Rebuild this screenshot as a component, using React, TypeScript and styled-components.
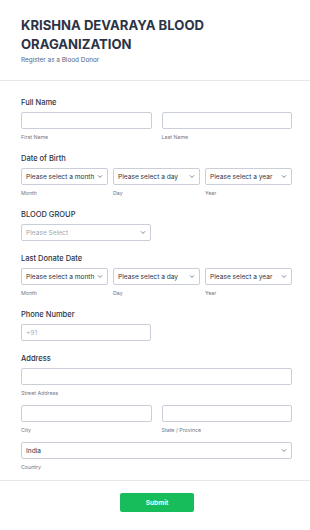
import styled, { createGlobalStyle } from "styled-components";

const GlobalStyle = createGlobalStyle`
  html, body {
    margin: 0;
    padding: 0;
    background: #ffffff;
  }
  body {
    font-family: Inter, "Noto Sans", "Liberation Sans", sans-serif;
    color: #2c3345;
  }
  * { box-sizing: border-box; }
`;

const Page = styled.div`
  width: 310px;
  min-height: 530px;
  background: #fff;
`;

const Header = styled.header`
  padding: 16px 18px 15px 21px;
  border-bottom: 1px solid #e5e7eb;
`;

const Title = styled.h1`
  margin: 0;
  font-size: 13.1px;
  line-height: 19px;
  font-weight: 700;
  color: #2c3345;
`;

const Subtitle = styled.p`
  margin: 2px 0 0;
  font-size: 6.4px;
  line-height: 9px;
  color: #57647e;
`;

const Fields = styled.div`
  display: flex;
  flex-direction: column;
  gap: 13px;
  padding: 17px 18px 9px 21px;
  border-bottom: 1px solid #e5e7eb;
`;

const Field = styled.div`
  display: flex;
  flex-direction: column;
`;

const Label = styled.div`
  font-size: 7.5px;
  line-height: 10px;
  font-weight: 500;
  color: #2c3345;
  margin-bottom: 4px;
`;

const Row = styled.div<{ cols: number; gap: number }>`
  display: grid;
  grid-template-columns: repeat(${(p) => p.cols}, 1fr);
  column-gap: ${(p) => p.gap}px;
  row-gap: 8px;
`;

const Cell = styled.div<{ half?: boolean; wide?: boolean }>`
  display: flex;
  flex-direction: column;
  width: ${(p) => (p.half ? "130px" : "auto")};
  grid-column: ${(p) => (p.wide ? "1 / -1" : "auto")};
`;

const TextInput = styled.input`
  height: 17px;
  width: 100%;
  border: 1px solid #c9ced9;
  border-radius: 2px;
  padding: 0 4px;
  font-family: inherit;
  font-size: 6.6px;
  color: #2c3345;
  background: #fff;
  outline: none;
  &::placeholder {
    color: #a7adbd;
  }
`;

const SelectBox = styled.div<{ muted?: boolean }>`
  height: 17px;
  width: 100%;
  border: 1px solid #c9ced9;
  border-radius: 2px;
  padding: 0 4px;
  display: flex;
  align-items: center;
  justify-content: space-between;
  font-size: 6.6px;
  color: ${(p) => (p.muted ? "#a0a7b8" : "#2c3345")};
  background: #fff;
  white-space: nowrap;
  overflow: hidden;
`;

const SubLabel = styled.div`
  margin-top: 4px;
  font-size: 5.3px;
  line-height: 8px;
  color: #6f7689;
`;

const Footer = styled.div`
  display: flex;
  justify-content: center;
  padding: 12px 0 16px 4px;
`;

const SubmitButton = styled.button`
  width: 74px;
  height: 19px;
  border: none;
  border-radius: 2px;
  background: #18bd5b;
  color: #fff;
  font-family: inherit;
  font-size: 6.6px;
  font-weight: 600;
  cursor: pointer;
`;

const Chevron = () => (
  <svg width="6" height="5" viewBox="0 0 10 8" fill="none">
    <path d="M2 2.5 L5 5.5 L8 2.5" stroke="#57647e" strokeWidth="1.3" strokeLinecap="round" strokeLinejoin="round" />
  </svg>
);

const Select = ({ text, muted }: { text: string; muted?: boolean }) => (
  <SelectBox muted={muted}>
    <span>{text}</span>
    <Chevron />
  </SelectBox>
);

const DateRow = () => (
  <Row cols={3} gap={5}>
    <Cell>
      <Select text="Please select a month" />
      <SubLabel>Month</SubLabel>
    </Cell>
    <Cell>
      <Select text="Please select a day" />
      <SubLabel>Day</SubLabel>
    </Cell>
    <Cell>
      <Select text="Please select a year" />
      <SubLabel>Year</SubLabel>
    </Cell>
  </Row>
);

export default function App() {
  return (
    <Page>
      <GlobalStyle />
      <Header>
        <Title>KRISHNA DEVARAYA BLOOD ORAGANIZATION</Title>
        <Subtitle>Register as a Blood Donor</Subtitle>
      </Header>
      <Fields>
        <Field>
          <Label>Full Name</Label>
          <Row cols={2} gap={10}>
            <Cell>
              <TextInput />
              <SubLabel>First Name</SubLabel>
            </Cell>
            <Cell>
              <TextInput />
              <SubLabel>Last Name</SubLabel>
            </Cell>
          </Row>
        </Field>
        <Field>
          <Label>Date of Birth</Label>
          <DateRow />
        </Field>
        <Field>
          <Label>BLOOD GROUP</Label>
          <Cell half>
            <Select text="Please Select" muted />
          </Cell>
        </Field>
        <Field>
          <Label>Last Donate Date</Label>
          <DateRow />
        </Field>
        <Field>
          <Label>Phone Number</Label>
          <Cell half>
            <TextInput placeholder="+91" />
          </Cell>
        </Field>
        <Field>
          <Label>Address</Label>
          <Row cols={2} gap={10}>
            <Cell wide>
              <TextInput />
              <SubLabel>Street Address</SubLabel>
            </Cell>
            <Cell>
              <TextInput />
              <SubLabel>City</SubLabel>
            </Cell>
            <Cell>
              <TextInput />
              <SubLabel>State / Province</SubLabel>
            </Cell>
            <Cell wide>
              <Select text="India" />
              <SubLabel>Country</SubLabel>
            </Cell>
          </Row>
        </Field>
      </Fields>
      <Footer>
        <SubmitButton>Submit</SubmitButton>
      </Footer>
    </Page>
  );
}
